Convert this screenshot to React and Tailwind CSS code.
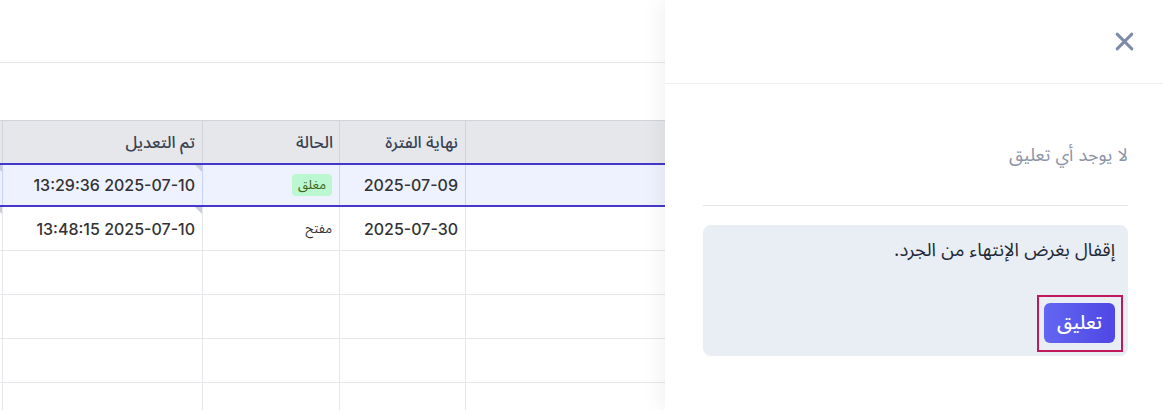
import React from "react";

const FONT = { fontFamily: "Inter, 'Noto Sans Arabic', 'DejaVu Sans', sans-serif" };

function Tri() {
  return (
    <span className="absolute top-0 right-0 w-0 h-0 border-l-[7px] border-l-transparent border-t-[7px] border-t-[#c9ced6]" />
  );
}

function Row({ selected, date, status, end, empty }) {
  const vb = selected ? "border-[#c7d2fe]" : "border-[#e5e7eb]";
  const cell = `relative h-full border-l ${vb} flex items-center justify-start px-[7px]`;
  return (
    <div
      dir="rtl"
      className={`grid grid-cols-[200px_126px_137px_200px_1fr] h-[44px] shrink-0 ${
        selected
          ? "bg-[#eef2ff] border-y-2 border-[#4338ca]"
          : "border-b border-[#e5e7eb]"
      }`}
    >
      <div className={cell}></div>
      <div className={cell}>
        {!empty && <span className="text-[16px] font-medium text-[#333]">{end}</span>}
      </div>
      <div className={cell}>
        {!empty &&
          (status === "مغلق" ? (
            <span className="bg-[#bbf7d0] text-[#3f6212] text-[13px] rounded-[4px] px-[6px] py-[1px]">
              {status}
            </span>
          ) : (
            <span className="text-[13px] text-[#333]">{status}</span>
          ))}
      </div>
      <div className={cell}>
        {!empty && <Tri />}
        {!empty && (
          <span dir="ltr" className="text-[16px] font-medium text-[#333]">
            {date}
          </span>
        )}
      </div>
      <div className="relative h-full">{!empty && <Tri />}</div>
    </div>
  );
}

export default function App() {
  return (
    <div className="w-[1163px] h-[410px] flex bg-white overflow-hidden" style={FONT}>
      {/* left page */}
      <div className="w-[665px] h-full overflow-hidden flex flex-col">
        <div className="h-[63px] border-b border-[#e5e7eb] shrink-0" />
        <div className="h-[57px] shrink-0" />
        <div
          dir="rtl"
          className="grid grid-cols-[200px_126px_137px_200px_1fr] h-[43px] bg-[#e5e7eb] border-t border-[#d1d5db] shrink-0"
        >
          <div className="border-l border-[#d1d5db]" />
          <div className="border-l border-[#d1d5db] flex items-center px-[7px] text-[16.5px] font-medium text-[#374151]">
            نهاية الفترة
          </div>
          <div className="border-l border-[#d1d5db] flex items-center px-[6px] text-[16.5px] font-medium text-[#374151]">
            الحالة
          </div>
          <div className="border-l border-[#d1d5db] flex items-center px-[7px] text-[16.5px] font-medium text-[#374151]">
            تم التعديل
          </div>
          <div />
        </div>
        <Row selected date="13:29:36 2025-07-10" status="مغلق" end="2025-07-09" />
        <Row date="13:48:15 2025-07-10" status="مفتح" end="2025-07-30" />
        <Row empty />
        <Row empty />
        <Row empty />
        <Row empty />
      </div>

      {/* side panel */}
      <div
        dir="rtl"
        className="w-[498px] h-full bg-white flex flex-col shadow-[-6px_0_18px_rgba(0,0,0,0.05)] relative z-10"
      >
        <div className="h-[84px] border-b border-[#eef0f3] flex items-center pr-[28px] shrink-0">
          <svg width="21" height="21" viewBox="0 0 20 20" className="text-[#7d8aa8]">
            <path d="M3 3 L17 17 M17 3 L3 17" stroke="currentColor" strokeWidth="2.8" strokeLinecap="round" />
          </svg>
        </div>
        <div className="pr-[35px] pl-[38px] flex flex-col">
          <div className="h-[121px] flex items-center pt-[28px] pb-[8px]">
            <span className="text-[18px] text-[#8a94a6]">لا يوجد أي تعليق</span>
          </div>
          <div className="border-t border-[#e2e5ea]" />
          <div className="mt-[19px] h-[131px] bg-[#e8eef4] rounded-lg pt-[11px] pb-[13px] pr-[13px] pl-[13px] flex flex-col justify-between">
            <div className="text-[18.5px] text-[#1f2937] leading-[26px]">إقفال بغرض الإنتهاء من الجرد.</div>
            <div className="flex">
              <div className="relative">
                <button className="h-[40px] w-[71px] rounded-md bg-gradient-to-r from-[#6366f1] to-[#4f46e5] text-white text-[19px] font-medium flex items-center justify-center">
                  تعليق
                </button>
                <div className="absolute -left-[7px] -right-[8px] -top-[8px] -bottom-[9px] border-2 border-[#c2185b] pointer-events-none" />
              </div>
            </div>
          </div>
        </div>
      </div>
    </div>
  );
}
